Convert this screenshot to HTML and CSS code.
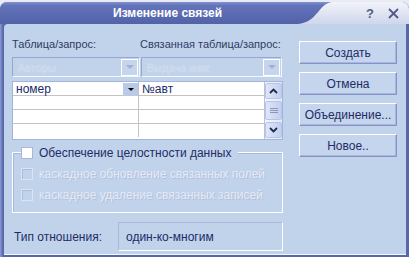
FILE: index.html
```html
<!DOCTYPE html>
<html lang="ru">
<head>
    <meta charset="UTF-8">
    <title>Изменение связей</title>
    <link rel="stylesheet" href="styles.css">
</head>
<body>
    <div class="window">
        <div class="titlebar">
            <svg class="title-bg" width="409" height="22" viewBox="0 0 409 22">
                <defs>
                    <linearGradient id="dark" x1="0" y1="0" x2="0" y2="1">
                        <stop offset="0" stop-color="#8392d2"/>
                        <stop offset="0.15" stop-color="#6474ba"/>
                        <stop offset="1" stop-color="#5262a8"/>
                    </linearGradient>
                    <linearGradient id="light" x1="0" y1="0" x2="0" y2="1">
                        <stop offset="0" stop-color="#f2f4fa"/>
                        <stop offset="1" stop-color="#cfd6ec"/>
                    </linearGradient>
                </defs>
                <rect width="409" height="22" fill="url(#dark)"/>
                <path d="M332 0 C318 2 318 20 298 22 L409 22 L409 0 Z" fill="url(#light)"/>
            </svg>
            <span class="title">Изменение связей</span>
            <span class="title-btn help">?</span>
            <span class="title-btn close">
                <svg width="11" height="11" viewBox="0 0 11 11">
                    <path d="M1 1 L10 10 M10 1 L1 10" stroke="#4f5b86" stroke-width="1.8" fill="none"/>
                </svg>
            </span>
        </div>
        <div class="frame">
            <div class="content">
                <div class="main">
                    <div class="labels">
                        <span>Таблица/запрос:</span>
                        <span>Связанная таблица/запрос:</span>
                    </div>
                    <div class="combos">
                        <div class="combo">
                            <span class="combo-text">Авторы</span>
                            <span class="combo-btn"><i class="tri"></i></span>
                        </div>
                        <div class="combo">
                            <span class="combo-text">Выдача книг</span>
                            <span class="combo-btn"><i class="tri"></i></span>
                        </div>
                    </div>
                    <div class="grid">
                        <div class="cells">
                            <div class="row">
                                <div class="cell cell-left">номер<span class="cell-drop"><i class="tri-dark"></i></span></div>
                                <div class="cell">№авт</div>
                            </div>
                            <div class="row">
                                <div class="cell cell-left"></div>
                                <div class="cell"></div>
                            </div>
                            <div class="row">
                                <div class="cell cell-left"></div>
                                <div class="cell"></div>
                            </div>
                            <div class="row">
                                <div class="cell cell-left"></div>
                                <div class="cell"></div>
                            </div>
                        </div>
                        <div class="scrollbar">
                            <span class="sb-btn">
                                <svg width="9" height="6" viewBox="0 0 9 6"><path d="M1 5 L4.5 1.5 L8 5" stroke="#1d2a55" stroke-width="1.8" fill="none"/></svg>
                            </span>
                            <span class="sb-thumb">
                                <svg width="8" height="7" viewBox="0 0 8 7"><path d="M0 1.5 H8 M0 3.5 H8 M0 5.5 H8" stroke="#8a96bc" stroke-width="1"/></svg>
                            </span>
                            <span class="sb-btn">
                                <svg width="9" height="6" viewBox="0 0 9 6"><path d="M1 1 L4.5 4.5 L8 1" stroke="#1d2a55" stroke-width="1.8" fill="none"/></svg>
                            </span>
                        </div>
                    </div>
                    <div class="group">
                        <label class="check legend"><span class="box"></span>Обеспечение целостности данных</label>
                        <label class="check disabled"><span class="box"></span>каскадное обновление связанных полей</label>
                        <label class="check disabled"><span class="box"></span>каскадное удаление связанных записей</label>
                    </div>
                    <div class="relation">
                        <span class="relation-label">Тип отношения:</span>
                        <span class="relation-value">один-ко-многим</span>
                    </div>
                </div>
                <div class="buttons">
                    <button>Создать</button>
                    <button>Отмена</button>
                    <button>Объединение...</button>
                    <button>Новое..</button>
                </div>
            </div>
        </div>
    </div>
</body>
</html>
```

FILE: styles.css
```css
html {
    background: #e8ebf3;
}
body {
    margin: 0;
    font-family: "Liberation Sans", Arial, sans-serif;
    font-size: 11px;
    color: #1f2c66;
}
.window {
    width: 409px;
    height: 255px;
    margin-top: 2px;
    display: flex;
    flex-direction: column;
    border-radius: 7px 7px 0 0;
    overflow: hidden;
    background: #6272b8;
}
.titlebar {
    position: relative;
    height: 22px;
    display: flex;
    align-items: center;
    flex-shrink: 0;
}
.title-bg {
    position: absolute;
    left: 0;
    top: 0;
}
.title {
    position: relative;
    margin-left: 113px;
    color: #fff;
    font-weight: bold;
    font-size: 12px;
    font-family: "Liberation Sans", Arial, sans-serif;
}
.title-btn {
    position: relative;
    color: #4f5b86;
    font-weight: bold;
    font-size: 13px;
}
.help {
    margin-left: auto;
}
.close {
    display: flex;
    margin: 0 10px 0 14px;
}
.frame {
    flex: 1;
    display: flex;
    padding: 0 3px 2px 4px;
    background: linear-gradient(to right, #8c9cd2, #5767ad 3px, #5767ad);
}
.content {
    flex: 1;
    display: flex;
    gap: 16px;
    padding: 14px 7px 0 8px;
    background: #c1d3eb;
    border-top-left-radius: 4px;
    border-bottom: 1px solid #f4f7fc;
}
.main {
    width: 271px;
    display: flex;
    flex-direction: column;
}
.labels {
    display: grid;
    grid-template-columns: 128px 1fr;
    line-height: 13px;
    color: #2f3b66;
}
.combos {
    display: grid;
    grid-template-columns: 129px 142px;
    margin-top: 6px;
}
.combo {
    height: 18px;
    display: flex;
    align-items: center;
    border: 1px solid;
    border-color: #96a6d2 #f2f5fb #f2f5fb #96a6d2;
    margin-right: 1px;
}
.combo-text {
    flex: 1;
    padding-left: 4px;
    color: #ccd8ec;
    text-shadow: 1px 1px 0 #d3ddef;
}
.combo-btn {
    width: 15px;
    height: 15px;
    margin-right: 1px;
    display: flex;
    align-items: center;
    justify-content: center;
    background: #c6d5ec;
    border: 1px solid #fff;
}
.tri {
    border-left: 4px solid transparent;
    border-right: 4px solid transparent;
    border-top: 4px solid #9fb0d6;
}
.grid {
    margin-top: 4px;
    height: 57px;
    display: flex;
    border: 1px solid #a3b4dd;
    background: #fff;
}
.cells {
    flex: 1;
}
.row {
    height: 13px;
    display: grid;
    grid-template-columns: 126px 1fr;
    border-bottom: 1px solid #c3c3c3;
}
.row:last-child {
    border-bottom: none;
}
.cell {
    display: flex;
    align-items: center;
    padding-left: 3px;
    color: #1a2a6a;
    font-size: 12px;
}
.cell-left {
    border-right: 1px solid #c3c3c3;
}
.cell-drop {
    margin-left: auto;
    width: 15px;
    height: 13px;
    display: flex;
    align-items: center;
    justify-content: center;
    background: #b9cae9;
}
.tri-dark {
    border-left: 3px solid transparent;
    border-right: 3px solid transparent;
    border-top: 3px solid #000;
}
.scrollbar {
    width: 17px;
    display: flex;
    flex-direction: column;
    justify-content: space-between;
    padding: 1px 0;
    background: linear-gradient(to right, #f4f6fc, #e4e9f6);
    border-left: 1px solid #b3c1e3;
}
.sb-btn, .sb-thumb {
    display: flex;
    align-items: center;
    justify-content: center;
    background: linear-gradient(to right, #dfe6f7, #c3cfee);
    border: 1px solid #b6c4e8;
    border-radius: 2px;
}
.sb-btn {
    height: 14px;
}
.sb-thumb {
    height: 17px;
}
.group {
    margin-top: 12px;
    height: 59px;
    display: flex;
    flex-direction: column;
    gap: 9px;
    padding: 0 0 0 8px;
    border: 1px solid #fff;
    box-shadow: inset 1px 1px 0 #a9b8da;
}
.check {
    display: flex;
    align-items: center;
    gap: 6px;
    height: 12px;
}
.legend {
    margin-top: -6px;
    align-self: flex-start;
    padding-right: 6px;
    background: #c1d3eb;
    color: #1f2c66;
    font-size: 12px;
}
.box {
    width: 10px;
    height: 10px;
    border: 1px solid #a9b8da;
    background: #fff;
}
.disabled {
    color: #e4eaf5;
    text-shadow: 1px 1px 0 #b3c1dc;
    font-size: 12px;
}
.disabled .box {
    background: #c1d3eb;
    border-color: #dbe3f2;
    box-shadow: inset 1px 1px 0 #aebcd9;
}
.relation {
    margin-top: 9px;
    display: flex;
    align-items: center;
}
.relation-label {
    width: 104px;
    padding-left: 2px;
    color: #1f2c66;
    font-size: 12px;
}
.relation-value {
    flex: 1;
    height: 27px;
    display: flex;
    align-items: center;
    padding-left: 7px;
    border: 1px solid;
    border-color: #a9b8da #fff #fff #a9b8da;
    color: #1a2a6a;
    font-size: 12px;
}
.buttons {
    display: flex;
    flex-direction: column;
    gap: 8px;
    padding-top: 3px;
}
button {
    width: 98px;
    height: 23px;
    padding: 0;
    font-family: "Liberation Sans", Arial, sans-serif;
    font-size: 12px;
    color: #1f2c66;
    background: #c4d5ed;
    border: 1px solid;
    border-color: #fff #8494c4 #8494c4 #fff;
    box-shadow: inset -1px -1px 0 #a8b7dd;
}
```
